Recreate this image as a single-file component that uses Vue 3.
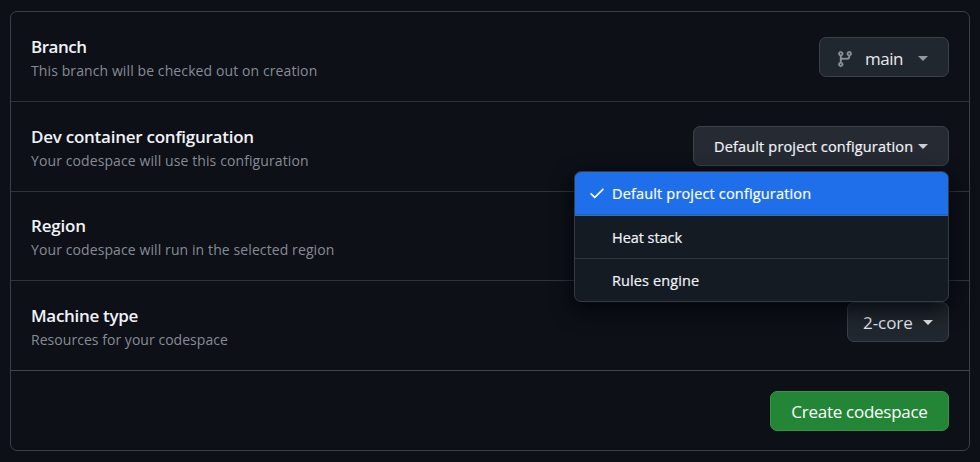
<script setup>
const rows = [
  { id: 'branch', title: 'Branch', note: 'This branch will be checked out on creation' },
  { id: 'config', title: 'Dev container configuration', note: 'Your codespace will use this configuration' },
  { id: 'region', title: 'Region', note: 'Your codespace will run in the selected region' },
  { id: 'machine', title: 'Machine type', note: 'Resources for your codespace' },
]
const options = [
  { id: 'default', label: 'Default project configuration', selected: true },
  { id: 'heat', label: 'Heat stack', selected: false },
  { id: 'rules', label: 'Rules engine', selected: false },
]
</script>

<template>
  <main class="page">
    <section class="card">
      <div v-for="row in rows" :key="row.id" class="row" :class="row.id">
        <div class="copy">
          <h2>{{ row.title }}</h2>
          <p>{{ row.note }}</p>
        </div>
        <button v-if="row.id === 'branch'" class="btn btn-branch">
          <svg class="git" width="18" height="18" viewBox="0 0 16 16">
            <path d="M11.75 2.5a.75.75 0 1 0 0 1.5.75.75 0 0 0 0-1.5Zm-2.25.75a2.25 2.25 0 1 1 3 2.122V6A2.5 2.5 0 0 1 10 8.5H6a1 1 0 0 0-1 1v1.128a2.251 2.251 0 1 1-1.5 0V5.372a2.25 2.25 0 1 1 1.5 0v1.836A2.492 2.492 0 0 1 6 7h4a1 1 0 0 0 1-1v-.628A2.25 2.25 0 0 1 9.5 3.25ZM4.25 12a.75.75 0 1 0 0 1.5.75.75 0 0 0 0-1.5ZM3.5 3.25a.75.75 0 1 0 1.5 0 .75.75 0 0 0-1.5 0Z" />
          </svg>
          <span class="label">main</span>
          <i class="caret"></i>
        </button>
        <div v-if="row.id === 'config'" class="picker">
          <button class="btn btn-config">
            <span class="label">Default project configuration</span>
            <i class="caret"></i>
          </button>
          <ul class="menu">
            <li v-for="option in options" :key="option.id" :class="[option.id, { selected: option.selected }]">
              <span class="tick">
                <svg v-if="option.selected" width="18" height="18" viewBox="0 0 16 16">
                  <path d="M13.78 4.22a.75.75 0 0 1 0 1.06l-7.25 7.25a.75.75 0 0 1-1.06 0L2.22 9.28a.751.751 0 0 1 .018-1.042.751.751 0 0 1 1.042-.018L6 10.94l6.72-6.72a.75.75 0 0 1 1.06 0Z" />
                </svg>
              </span>
              <span>{{ option.label }}</span>
            </li>
          </ul>
        </div>
        <button v-if="row.id === 'machine'" class="btn btn-machine">
          <span class="label">2-core</span>
          <i class="caret"></i>
        </button>
      </div>
      <footer class="footer">
        <button class="btn btn-create"><span class="label">Create codespace</span></button>
      </footer>
    </section>
  </main>
</template>

<style>
body {
  background: #0d1017;
}
</style>

<style scoped>
.page {
  box-sizing: border-box;
  height: 462px;
  padding: 11px 10px;
  font-family: "Open Sans", "Noto Sans", sans-serif;
  color: #f0f3f9;
}
.card {
  box-sizing: border-box;
  height: 440px;
  border: 1px solid #3b4048;
  border-radius: 7px;
}
.row {
  box-sizing: border-box;
  display: flex;
  justify-content: space-between;
  align-items: flex-start;
  height: 90px;
  padding: 22px 20px 0;
  border-bottom: 1px solid #30353d;
}
.row.region {
  height: 89px;
  padding-top: 21px;
}
.row.machine {
  border-bottom-color: #41454c;
}
h2,
p {
  margin: 0;
  white-space: nowrap;
}
h2 {
  font-size: 17px;
  line-height: 25px;
  font-weight: 600;
  letter-spacing: -0.3px;
}
.branch h2 {
  letter-spacing: -0.5px;
}
.config h2 {
  letter-spacing: -0.25px;
}
.region h2 {
  letter-spacing: -0.2px;
}
p {
  font-size: 14px;
  line-height: 23px;
  letter-spacing: 0.1px;
  color: #868c95;
}
.machine p {
  letter-spacing: 0.04px;
}
.btn {
  box-sizing: border-box;
  display: flex;
  align-items: center;
  height: 40px;
  padding: 0;
  border: 1px solid #3a4149;
  border-radius: 7px;
  background: #21272e;
  color: #e6eaf0;
  font: 400 17px/24px "Open Sans", "Noto Sans", sans-serif;
  white-space: nowrap;
}
.caret {
  width: 0;
  height: 0;
  border: 5px solid transparent;
  border-top-color: currentColor;
  border-bottom-width: 0;
}
.git {
  fill: #8b929b;
  stroke: #8b929b;
  stroke-width: 0.2;
}
.btn-branch {
  width: 130px;
  margin-top: 3px;
  padding: 4px 20px 0 16px;
}
.btn-branch .label {
  margin-left: 11px;
  letter-spacing: -0.5px;
}
.btn-branch .caret {
  margin-left: auto;
  margin-bottom: 2px;
  color: #9299a2;
}
.picker {
  position: relative;
  margin-top: 2px;
}
.btn-config {
  width: 256px;
  padding: 2px 20px 0;
  justify-content: space-between;
  background: #262b33;
  font-size: 14.5px;
  letter-spacing: 0.16px;
  color: #f0f3f9;
  -webkit-text-stroke: 0.2px currentColor;
}
.btn-config .caret {
  margin-bottom: 2px;
  color: #c9ced6;
}
.menu {
  position: absolute;
  top: 45px;
  right: 0;
  z-index: 2;
  box-sizing: border-box;
  width: 375px;
  margin: 0;
  padding: 0;
  border: 1px solid #353b43;
  border-radius: 7px;
  overflow: hidden;
  list-style: none;
  background: #151b22;
  box-shadow: 0 7px 22px rgba(1, 4, 9, 0.85);
  font-size: 14.5px;
  letter-spacing: 0.16px;
  -webkit-text-stroke: 0.2px currentColor;
}
.menu li {
  box-sizing: border-box;
  display: flex;
  align-items: center;
  height: 43px;
  padding: 1px 0 0 13px;
  border-bottom: 1px solid #30363d;
}
.menu li.selected {
  background: #1f6feb;
  border-bottom-color: #3c5f92;
  box-shadow: 0 1px #1f6feb;
  color: #fff;
}
.menu li.heat {
  height: 44px;
  padding-top: 2px;
  letter-spacing: -0.05px;
}
.menu li.rules {
  height: 42px;
  border-bottom: 0;
  letter-spacing: 0.1px;
}
.tick {
  display: flex;
  width: 24px;
}
.tick svg {
  fill: #fff;
  margin-top: -2px;
}
.btn-machine {
  width: 102px;
  margin-top: -1px;
  padding: 1px 15px 0;
  justify-content: space-between;
}
.btn-machine .label {
  letter-spacing: -0.05px;
}
.footer {
  display: flex;
  justify-content: flex-end;
  padding: 20px 20px 0;
}
.btn-create {
  width: 179px;
  padding-top: 2px;
  justify-content: center;
  border-color: #369446;
  background: #238636;
  color: #fff;
  letter-spacing: -0.27px;
}
</style>
